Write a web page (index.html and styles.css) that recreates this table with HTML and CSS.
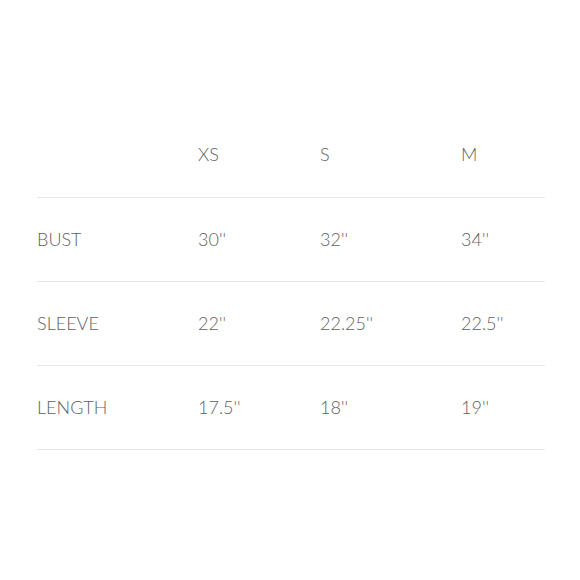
FILE: index.html
```html
<!DOCTYPE html>
<html>
<head>
<meta charset="utf-8">
<link rel="stylesheet" href="styles.css">
</head>
<body>
<div class="page">
  <table class="size-table">
    <colgroup>
      <col class="c-label"><col class="c-xs"><col class="c-s"><col class="c-m">
    </colgroup>
    <thead>
      <tr><th></th><th>XS</th><th>S</th><th>M</th></tr>
    </thead>
    <tbody>
      <tr><td>BUST</td><td>30''</td><td>32''</td><td>34''</td></tr>
      <tr><td>SLEEVE</td><td>22''</td><td>22.25''</td><td>22.5''</td></tr>
      <tr><td>LENGTH</td><td>17.5''</td><td>18''</td><td>19''</td></tr>
    </tbody>
  </table>
</div>
</body>
</html>
```
FILE: styles.css
```css
html, body {
  margin: 0;
  background: #ffffff;
}
.page {
  padding: 113px 0 0 37px;
}
.size-table {
  border-collapse: collapse;
  width: 508px;
  table-layout: fixed;
  font-family: "Lato", "Open Sans", sans-serif;
  font-size: 18px;
  color: #5f5f5f;
}
.c-label { width: 161px; }
.c-xs { width: 122px; }
.c-s { width: 141px; }
.c-m { width: 84px; }
.size-table th,
.size-table td {
  box-sizing: border-box;
  height: 84px;
  padding: 0 0 1px 0;
  text-align: left;
  font-weight: 300;
  vertical-align: middle;
  border-bottom: 1px solid #e6e6e6;
}
```
